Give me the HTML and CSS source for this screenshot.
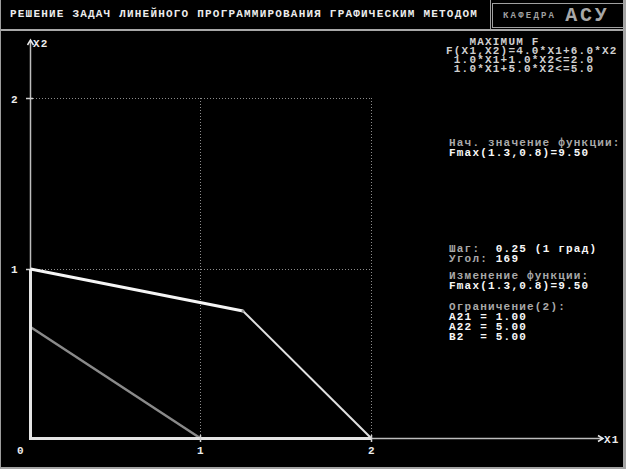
FILE: index.html
```html
<!DOCTYPE html>
<html lang="ru">
<head>
<meta charset="utf-8">
<title>Решение задач линейного программирования</title>
<link rel="stylesheet" href="styles.css">
</head>
<body>
<div class="screen">
  <header class="top">
    <div class="title">РЕШЕНИЕ ЗАДАЧ ЛИНЕЙНОГО ПРОГРАММИРОВАНИЯ ГРАФИЧЕСКИМ МЕТОДОМ</div>
    <div class="dept"><span class="dept-name">КАФЕДРА</span><span class="dept-code">АСУ</span></div>
  </header>
  <main class="stage">
    <svg class="plot" width="622" height="436" viewBox="1 31 622 436" xmlns="http://www.w3.org/2000/svg">
      <g class="grid">
        <line x1="33" y1="98.5" x2="371" y2="98.5"/>
        <line x1="33" y1="269.5" x2="371" y2="269.5"/>
        <line x1="200.5" y1="98" x2="200.5" y2="437"/>
        <line x1="371.5" y1="98" x2="371.5" y2="437"/>
      </g>
      <line class="axis-thin" x1="30.5" y1="41" x2="30.5" y2="269"/>
      <polyline class="arrow" points="27.5,45 30.5,40 33.5,45"/>
      <line class="axis-thin" x1="371" y1="438.5" x2="603" y2="438.5"/>
      <polyline class="arrow" points="598,435.5 603,438.5 598,441.5"/>
      <line class="tick" x1="26" y1="98.5" x2="33" y2="98.5"/>
      <line class="tick" x1="26" y1="269.5" x2="33" y2="269.5"/>
      <line class="gray-line" x1="30.5" y1="327" x2="200" y2="438"/>
      <line class="axis-thick" x1="30.5" y1="269" x2="30.5" y2="438"/>
      <line class="axis-thick" x1="29" y1="438.5" x2="371" y2="438.5"/>
      <line class="bound-thick" x1="30.5" y1="269" x2="243" y2="311"/>
      <line class="bound-thin" x1="243" y1="311" x2="371" y2="438"/>
      <circle class="vertex" cx="243" cy="311" r="1.5"/>
      <line class="tick" x1="200.5" y1="435" x2="200.5" y2="442"/>
      <line class="tick" x1="371.5" y1="435" x2="371.5" y2="442"/>
      <g class="labels">
        <text x="33" y="47">X2</text>
        <text x="604" y="443">X1</text>
        <text x="11" y="103">2</text>
        <text x="11" y="273">1</text>
        <text x="17" y="454">0</text>
        <text x="197" y="454">1</text>
        <text x="368" y="454">2</text>
      </g>
    </svg>
    <aside class="info">
      <pre class="block task">   MAXIMUM F
F(X1,X2)=4.0*X1+6.0*X2
 1.0*X1+1.0*X2&lt;=2.0
 1.0*X1+5.0*X2&lt;=5.0</pre>
      <div class="block start">
        <div class="line dim">Нач. значение функции:</div>
        <div class="line hi">Fmax(1.3,0.8)=9.50</div>
      </div>
      <div class="block step">
        <div class="line"><span class="dim">Шаг:</span><span class="hi">  0.25 (1 град)</span></div>
        <div class="line"><span class="dim">Угол:</span><span class="hi"> 169</span></div>
      </div>
      <div class="block change">
        <div class="line dim">Изменение функции:</div>
        <div class="line hi">Fmax(1.3,0.8)=9.50</div>
      </div>
      <div class="block limit">
        <div class="line dim">Ограничение(2):</div>
        <div class="line hi">A21 = 1.00</div>
        <div class="line hi">A22 = 5.00</div>
        <div class="line hi">B2  = 5.00</div>
      </div>
    </aside>
  </main>
</div>
</body>
</html>
```
FILE: styles.css
```css
* { box-sizing: border-box; }
html, body { margin: 0; padding: 0; background: #000; }
body {
  font-family: "Liberation Mono", "DejaVu Sans Mono", monospace;
  font-weight: bold;
}
.screen {
  width: 626px;
  height: 469px;
  background: #000;
  border-left: 1px solid #9c9c9c;
  border-right: 3px solid #a4a4a4;
  border-bottom: 2px solid #a4a4a4;
  display: flex;
  flex-direction: column;
  overflow: hidden;
}
.top {
  height: 31px;
  display: flex;
  border-bottom: 2px solid #a8a8a8;
  flex: none;
}
.title {
  width: 490px;
  border-right: 1px solid #a0a0a0;
  padding-left: 9px;
  padding-bottom: 1px;
  font-size: 11px;
  letter-spacing: 1.2px;
  color: #ececec;
  display: flex;
  align-items: center;
  white-space: nowrap;
}
.dept {
  flex: 1;
  margin: 3px 0 1px 1px;
  border: 1px solid #a0a0a0;
  border-right: none;
  display: flex;
  align-items: center;
  padding-left: 10px;
  gap: 9px;
}
.dept-name {
  font-size: 9px;
  letter-spacing: 2.2px;
  color: #a0a0a0;
}
.dept-code {
  font-size: 20px;
  letter-spacing: 2.8px;
  color: #a8a8a8;
  line-height: 1;
}
.stage {
  flex: 1;
  display: grid;
  grid-template-columns: 1fr;
  grid-template-rows: 1fr;
}
.plot, .info { grid-area: 1 / 1; }
.plot { display: block; }
.grid line { stroke: #8c8c8c; stroke-width: 1; stroke-dasharray: 1 2; }
.axis-thin { stroke: #bdbdbd; stroke-width: 1.5; }
.axis-thick { stroke: #e4e4e4; stroke-width: 3; }
.arrow { fill: none; stroke: #e8e8e8; stroke-width: 1.5; }
.tick { stroke: #d0d0d0; stroke-width: 1.5; }
.gray-line { stroke: #8a8a8a; stroke-width: 2.5; }
.bound-thick { stroke: #f6f6f6; stroke-width: 3; }
.bound-thin { stroke: #e0e0e0; stroke-width: 2; }
.vertex { fill: #9a9a9a; }
.labels text {
  font-family: "Liberation Mono", "DejaVu Sans Mono", monospace;
  font-weight: bold;
  font-size: 11px;
  letter-spacing: 1.2px;
  fill: #ececec;
}
.info {
  padding-left: 445px;
  padding-top: 7px;
  font-size: 11px;
  letter-spacing: 1.2px;
  display: flex;
  flex-direction: column;
  align-items: flex-start;
  pointer-events: none;
}
.block { margin: 0; }
.line { white-space: pre; }
.task {
  font-family: inherit;
  font-size: 11px;
  line-height: 9px;
  white-space: pre;
  color: #cfcfcf;
}
.start, .step, .change, .limit { margin-left: 3px; line-height: 10px; }
.start { margin-top: 64px; }
.step { margin-top: 86px; }
.change { margin-top: 6.5px; }
.limit { margin-top: 11px; }
.dim { color: #a9a9a9; }
.hi { color: #f8f8f8; }
```
